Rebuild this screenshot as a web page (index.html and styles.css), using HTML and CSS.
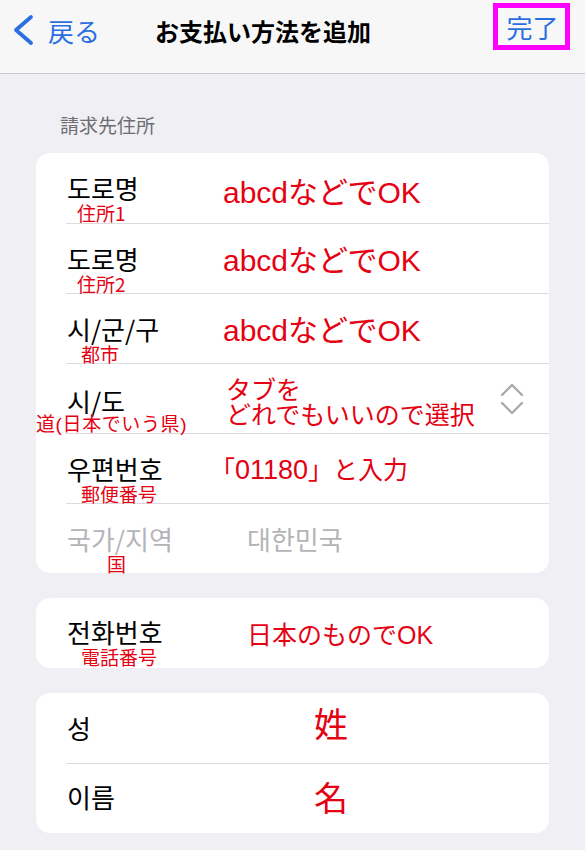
FILE: index.html
```html
<!DOCTYPE html>
<html lang="ja">
<head>
<meta charset="utf-8">
<title>お支払い方法を追加</title>
<link rel="stylesheet" href="styles.css">
</head>
<body>
<header class="navbar">
  <div class="back">
    <svg class="back-chevron" width="22" height="34" viewBox="0 0 22 34" aria-hidden="true">
      <path d="M18 3 L3 16 L18 29" fill="none" stroke="#2a6fe0" stroke-width="3.8" stroke-linecap="round" stroke-linejoin="round"/>
    </svg>
    <span class="back-text">戻る</span>
  </div>
  <div class="title">お支払い方法を追加</div>
  <div class="done"><span>完了</span></div>
</header>

<main class="content">
  <div class="section-title">請求先住所</div>

  <section class="card">
    <div class="row">
      <div class="label-col">
        <div class="label">도로명</div>
        <div class="note note-11">住所1</div>
      </div>
      <div class="value value-big value-first">abcdなどでOK</div>
    </div>
    <div class="row">
      <div class="label-col">
        <div class="label">도로명</div>
        <div class="note note-11">住所2</div>
      </div>
      <div class="value value-big">abcdなどでOK</div>
    </div>
    <div class="row">
      <div class="label-col">
        <div class="label">시/군/구</div>
        <div class="note note-15">都市</div>
      </div>
      <div class="value value-big">abcdなどでOK</div>
    </div>
    <div class="row">
      <div class="label-col label-col-low">
        <div class="label label-short">시/도</div>
        <div class="note note-left">道(日本でいう県)</div>
      </div>
      <div class="value value-two">タブを<br>どれでもいいので選択</div>
      <svg class="updown" width="26" height="34" viewBox="0 0 26 34" aria-hidden="true">
        <path d="M3 13 L13 3 L23 13" fill="none" stroke="#a6a6aa" stroke-width="2.2" stroke-linecap="round" stroke-linejoin="round"/>
        <path d="M3 21 L13 31 L23 21" fill="none" stroke="#a6a6aa" stroke-width="2.2" stroke-linecap="round" stroke-linejoin="round"/>
      </svg>
    </div>
    <div class="row">
      <div class="label-col">
        <div class="label">우편번호</div>
        <div class="note note-15">郵便番号</div>
      </div>
      <div class="value value-zip">「<span class="zip-digits">01180</span>」と入力</div>
    </div>
    <div class="row">
      <div class="label-col">
        <div class="label label-dim">국가/지역</div>
        <div class="note note-40 note-tight">国</div>
      </div>
      <div class="value value-dim">대한민국</div>
    </div>
  </section>

  <section class="card">
    <div class="row">
      <div class="label-col label-col-phone">
        <div class="label">전화번호</div>
        <div class="note note-15 note-tight">電話番号</div>
      </div>
      <div class="value value-phone">日本のものでOK</div>
    </div>
  </section>

  <section class="card">
    <div class="row">
      <div class="label-col">
        <div class="label">성</div>
      </div>
      <div class="value value-name value-sei">姓</div>
    </div>
    <div class="row">
      <div class="label-col label-col-mei">
        <div class="label">이름</div>
      </div>
      <div class="value value-name value-mei">名</div>
    </div>
  </section>
</main>
</body>
</html>
```

FILE: styles.css
```css
* {
  box-sizing: border-box;
}

html, body {
  margin: 0;
  padding: 0;
}

body {
  width: 585px;
  height: 850px;
  overflow: hidden;
  background: #efeff4;
  font-family: "Noto Sans CJK JP", "Noto Sans CJK KR", sans-serif;
  color: #000;
}

/* ---------- navigation bar ---------- */
.navbar {
  height: 74px;
  background: #f7f7f7;
  border-bottom: 1px solid #c9c9cc;
  display: flex;
  align-items: center;
  padding: 0 15px 0 13px;
}

.back {
  display: flex;
  align-items: center;
  gap: 13px;
  margin-top: -11px;
}

.back-chevron {
  display: block;
  flex: none;
}

.back-text {
  font-size: 26px;
  line-height: 32px;
  color: #2a6fe0;
}

.title {
  margin-left: 55px;
  margin-top: -11px;
  font-size: 24px;
  line-height: 32px;
  font-weight: 700;
  color: #000;
  white-space: nowrap;
}

.done {
  margin-left: auto;
  margin-top: -20px;
  width: 77px;
  height: 47px;
  border: 5px solid #ff00ff;
  display: flex;
  align-items: center;
  justify-content: center;
}

.done span {
  font-size: 26px;
  line-height: 30px;
  color: #2a6fe0;
  padding-left: 2px;
}

/* ---------- content ---------- */
.content {
  padding: 39px 36px 0 36px;
  display: flex;
  flex-direction: column;
}

.section-title {
  padding-left: 24px;
  font-size: 19px;
  line-height: 24px;
  color: #6d6d72;
  margin-bottom: 16px;
}

.card {
  background: #fff;
  border-radius: 14px;
  padding-left: 30px;
  margin-bottom: 25px;
}

.row {
  height: 70px;
  display: flex;
  border-top: 1px solid #dcdcdf;
}

.row:first-child {
  border-top: 0;
}

.label-col {
  width: 157px;
  flex: none;
  padding-top: 21px;
  padding-left: 1px;
}

.label-col-low {
  padding-top: 24px;
}

.label-col-phone {
  padding-top: 20px;
}

.label-col-mei {
  padding-top: 19px;
}

.label {
  font-family: "Noto Sans CJK KR", "Noto Sans CJK JP", sans-serif;
  font-size: 26px;
  line-height: 28px;
  color: #000;
  white-space: nowrap;
}

.label-short {
  line-height: 26px;
}

.label-dim {
  color: #b4b4b8;
}

.note {
  font-family: "Noto Sans CJK JP", sans-serif;
  font-size: 19px;
  line-height: 22px;
  color: #e50012;
  white-space: nowrap;
}

.note-tight {
  line-height: 20px;
  padding-top: 1px;
}

.note-11 { margin-left: 10px; }
.note-15 { margin-left: 14px; }
.note-40 { margin-left: 40px; }
.note-left {
  margin-left: -31px;
  letter-spacing: 0.6px;
  font-family: "Liberation Sans", "Noto Sans CJK JP", sans-serif;
}

.value {
  color: #e50012;
  white-space: nowrap;
}

.value-big {
  font-family: "Liberation Sans", "Noto Sans CJK JP", sans-serif;
  font-size: 30px;
  line-height: 36px;
  padding-top: 19px;
}

.value-first {
  padding-top: 22px;
}

.value-two {
  font-size: 25px;
  line-height: 24.5px;
  padding-top: 12px;
  margin-left: 3px;
}

.value-zip {
  font-size: 25px;
  line-height: 28px;
  padding-top: 20px;
  margin-left: -13px;
}

.zip-digits {
  font-family: "Liberation Sans", sans-serif;
  font-size: 27px;
}

.value-dim {
  font-family: "Noto Sans CJK KR", sans-serif;
  font-size: 26px;
  line-height: 28px;
  padding-top: 21px;
  margin-left: 24px;
  color: #b4b4b8;
}

.value-phone {
  font-family: "Liberation Sans", "Noto Sans CJK JP", sans-serif;
  font-size: 25px;
  line-height: 30px;
  padding-top: 22px;
  margin-left: 24px;
}

.value-name {
  font-size: 34px;
  line-height: 40px;
  margin-left: 91px;
}

.value-sei {
  padding-top: 10px;
}

.value-mei {
  padding-top: 13px;
}

.updown {
  display: block;
  flex: none;
  align-self: center;
  margin-left: auto;
  margin-right: 24px;
}
```
